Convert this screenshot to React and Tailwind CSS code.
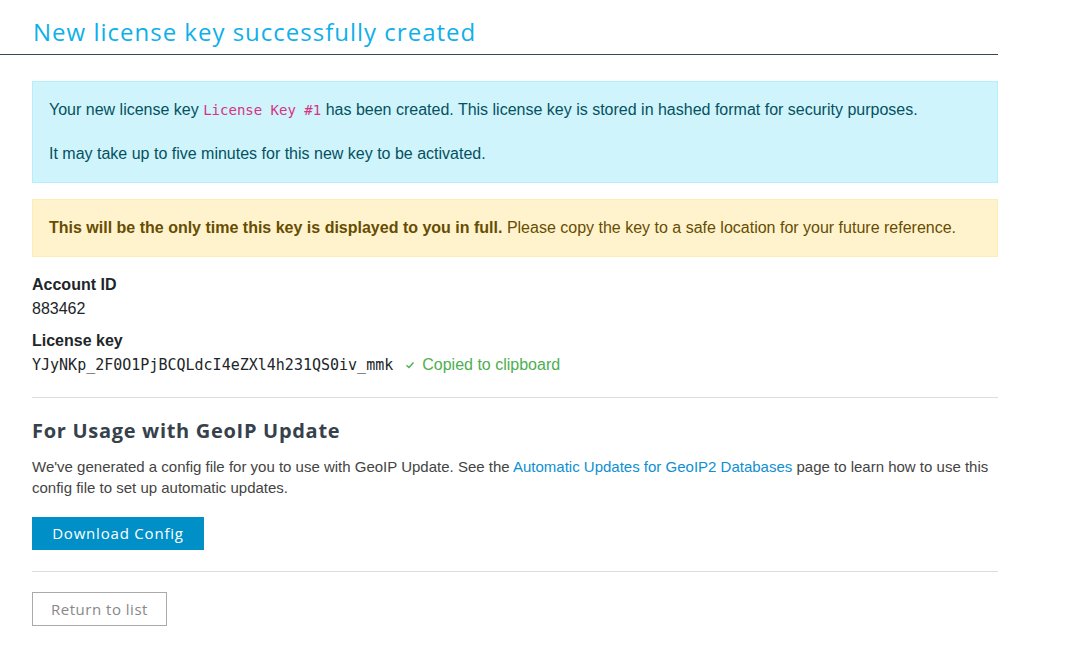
export default function App() {
  const sans = { fontFamily: '"Liberation Sans", Arial, sans-serif' };
  return (
    <div className="min-h-[663px] bg-white text-[#212529]" style={sans}>
      <div className="w-[998px]">
        {/* Header */}
        <div className="pl-[33px] pt-[16px] pb-[6px] border-b border-[#3a4650]">
          <h1 className="text-[24px] leading-[32px] tracking-[1px] text-[#0fb0ea] font-['Open_Sans',sans-serif]">
            New license key successfully created
          </h1>
        </div>

        <div className="pl-[32px] pt-[26px]">
          {/* Info alert */}
          <div className="border border-[#b6effb] bg-[#cff4fc] text-[#055160] px-[16px] py-[16px] text-[16px] leading-[24px]">
            <p className="mb-[20px]">
              Your new license key{' '}
              <code className="text-[#d63384] text-[14px] font-['DejaVu_Sans_Mono',monospace]">License Key #1</code>{' '}
              has been created. This license key is stored in hashed format for security purposes.
            </p>
            <p>It may take up to five minutes for this new key to be activated.</p>
          </div>

          {/* Warning alert */}
          <div className="mt-[16px] border border-[#ffecb5] bg-[#fff3cd] text-[#664d03] px-[16px] py-[16px] text-[16px] leading-[24px]">
            <strong className="font-bold">This will be the only time this key is displayed to you in full.</strong>{' '}
            Please copy the key to a safe location for your future reference.
          </div>

          {/* Details */}
          <dl className="mt-[16px] text-[16px] leading-[24px]">
            <dt className="font-bold">Account ID</dt>
            <dd>883462</dd>
            <dt className="font-bold mt-[8px]">License key</dt>
            <dd className="flex items-center">
              <span className="text-[15px] font-['DejaVu_Sans_Mono',monospace]">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</span>
              <span className="ml-[12px] flex items-center text-[#4caf50]">
                <svg width="10" height="10" viewBox="0 0 10 10" className="mr-[7px]">
                  <path d="M1.5 5.2 L4 7.5 L8.5 2.5" fill="none" stroke="#4caf50" strokeWidth="1.4" />
                </svg>
                Copied to clipboard
              </span>
            </dd>
          </dl>

          <hr className="mt-[20px] border-t border-[#dddddd]" />

          {/* GeoIP Update */}
          <h2 className="mt-[18px] text-[20px] leading-[30px] tracking-[0.7px] font-bold text-[#36414c] font-['Open_Sans',sans-serif]">
            For Usage with GeoIP Update
          </h2>
          <p className="mt-[10px] text-[15px] leading-[21px] text-[#444444]">
            We've generated a config file for you to use with GeoIP Update. See the{' '}
            <a className="text-[#0e8fd1]" href="#">Automatic Updates for GeoIP2 Databases</a>{' '}
            page to learn how to use this config file to set up automatic updates.
          </p>

          <button className="mt-[19px] h-[33px] w-[172px] bg-[#008fc7] text-white text-[15px] tracking-[0.8px] font-['Open_Sans',sans-serif]">
            Download Config
          </button>

          <hr className="mt-[21px] border-t border-[#dddddd]" />

          <button className="mt-[20px] h-[34px] w-[135px] border border-[#aaaaaa] text-[#888888] text-[15px] tracking-[0.5px] font-['Open_Sans',sans-serif]">
            Return to list
          </button>
        </div>
      </div>
    </div>
  );
}
